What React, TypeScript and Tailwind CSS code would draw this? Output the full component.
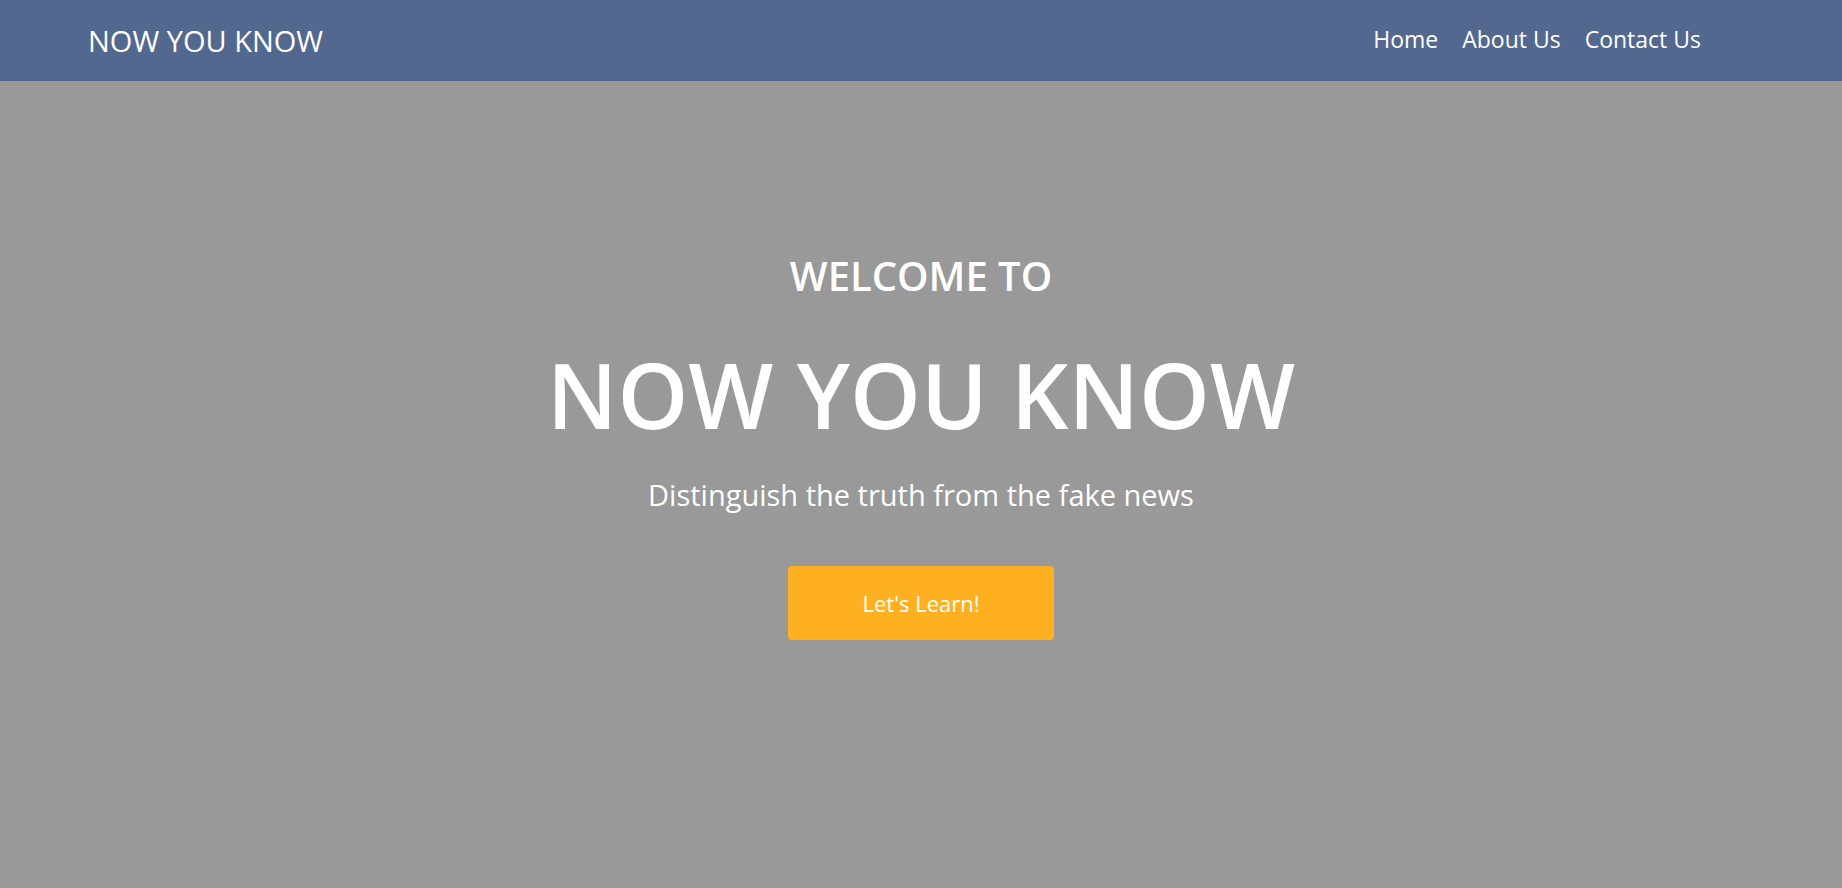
import React from 'react';

const font = { fontFamily: '"Open Sans", "Noto Sans", sans-serif' };

export default function App() {
  const links = ['Home', 'About Us', 'Contact Us'];

  return (
    <div className="min-h-screen flex flex-col bg-[#999999] text-white" style={font}>
      <nav className="h-[81px] bg-[#53688f] flex items-center justify-between pl-[88px] pr-[141px]">
        <a href="#" className="text-[29px] leading-none">NOW YOU KNOW</a>
        <ul className="flex items-center gap-[24px]">
          {links.map((link) => (
            <li key={link}>
              <a href="#" className="text-[23px] leading-none">{link}</a>
            </li>
          ))}
        </ul>
      </nav>

      <section className="flex-1 flex flex-col items-center pt-[175px] text-center">
        <h3 className="text-[40px] leading-none font-semibold">WELCOME TO</h3>
        <h1 className="mt-[53px] text-[90px] leading-none font-semibold">NOW YOU KNOW</h1>
        <p className="mt-[41px] text-[29px] leading-none">Distinguish the truth from the fake news</p>
        <button className="mt-[57px] w-[266px] h-[74px] rounded-[4px] bg-[#ffb020] text-[22px] text-white">
          Let's Learn!
        </button>
      </section>
    </div>
  );
}
